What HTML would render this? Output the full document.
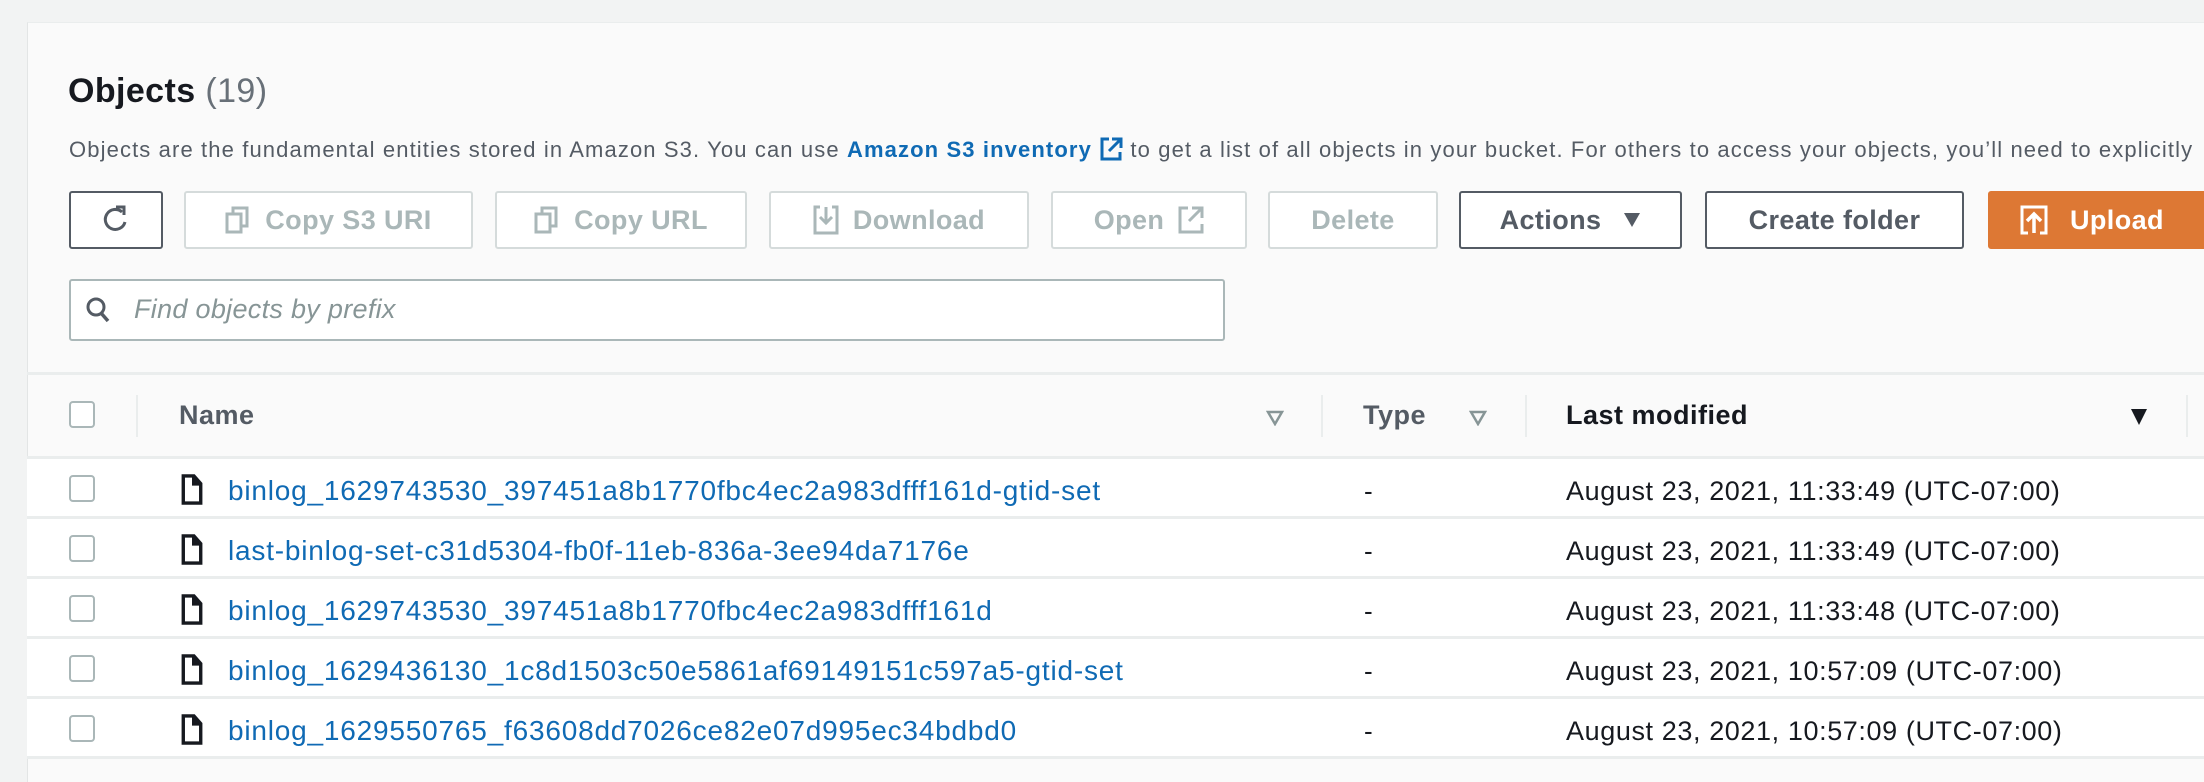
<!DOCTYPE html>
<html><head><meta charset="utf-8"><style>
*{box-sizing:border-box;margin:0;padding:0}
body{width:2204px;height:760px;overflow:hidden;background:#f2f3f3;font-family:"Liberation Sans",sans-serif;position:relative}
.panel{position:absolute;left:27px;top:22px;width:2200px;height:760px;background:#fafafa;border-left:1px solid #e3e5e5;border-top:1px solid #eaeded}
.a{position:absolute}
.btn{position:absolute;top:191px;height:58px;border:2px solid #d5dbdb;border-radius:3px;background:#fff;color:#aab7b8;font-weight:bold;font-size:27px;display:flex;align-items:center;justify-content:center;gap:14px;letter-spacing:0.4px}
.btn.dark{border-color:#545b64;color:#545b64}
.cb{position:absolute;left:69px;width:26px;height:27px;border:2px solid #aab7b8;border-radius:4px;background:#fff}
.row{position:absolute;left:27px;width:2180px;height:60px;background:#fff;border-bottom:3px solid #eaeded}
.fn{position:absolute;left:228px;color:#0f6ab4;font-size:28px;line-height:32px;letter-spacing:0.8px;white-space:nowrap}
.dt{position:absolute;left:1566px;color:#16191f;font-size:27px;line-height:32px;letter-spacing:0.6px;white-space:nowrap}
.dash{position:absolute;left:1364px;color:#16191f;font-size:26px;line-height:32px}
.th{position:absolute;top:399px;font-size:27px;line-height:32px;font-weight:bold;color:#545b64;letter-spacing:0.5px}
.div{position:absolute;top:395px;width:2px;height:42px;background:#eaeded}
</style></head><body>
<div class="panel"></div>
<div class="a" style="left:68px;top:72px;font-size:34px;font-weight:bold;color:#16191f;letter-spacing:0.4px">Objects <span style="font-weight:normal;color:#687078">(19)</span></div>
<div class="a" style="left:69px;top:136px;font-size:22px;color:#545b64;white-space:nowrap;letter-spacing:1.12px">Objects are the fundamental entities stored in Amazon S3. You can use <b style="color:#0f6ab4">Amazon S3 inventory</b> <svg width="24" height="26" viewBox="0 0 24 26" style="vertical-align:-5px"><path d="M10 3H3v20h18v-7" fill="none" stroke="#0f6ab4" stroke-width="3"/><path d="M13 3h9v9M22 3L10 15" fill="none" stroke="#0f6ab4" stroke-width="3"/></svg> to get a list of all objects in your bucket. For others to access your objects, you’ll need to explicitly</div>

<div class="btn dark" style="left:69px;width:94px"><svg width="26" height="32" viewBox="0 0 26 32"><path d="M19 8A10 10 0 1 0 22 18" fill="none" stroke="#545b64" stroke-width="3"/><path d="M13 3h8v8" fill="none" stroke="#545b64" stroke-width="3"/></svg></div>
<div class="btn" style="left:184px;width:289px"><svg width="26" height="28" viewBox="0 0 26 28"><rect x="2" y="8" width="14" height="18" fill="none" stroke="#aab7b8" stroke-width="3"/><path d="M8 8V2h14v18h-6" fill="none" stroke="#aab7b8" stroke-width="3"/></svg>Copy S3 URI</div>
<div class="btn" style="left:495px;width:252px"><svg width="26" height="28" viewBox="0 0 26 28"><rect x="2" y="8" width="14" height="18" fill="none" stroke="#aab7b8" stroke-width="3"/><path d="M8 8V2h14v18h-6" fill="none" stroke="#aab7b8" stroke-width="3"/></svg>Copy URL</div>
<div class="btn" style="left:769px;width:260px"><svg width="26" height="30" viewBox="0 0 26 30"><path d="M7 2H2v26h22V2h-5" fill="none" stroke="#aab7b8" stroke-width="3"/><path d="M13 2v16M7 12l6 6 6-6" fill="none" stroke="#aab7b8" stroke-width="3"/></svg>Download</div>
<div class="btn" style="left:1051px;width:196px">Open <svg width="26" height="28" viewBox="0 0 26 28"><path d="M10 2H2v24h22v-8" fill="none" stroke="#aab7b8" stroke-width="3"/><path d="M14 2h10v10M24 2L11 15" fill="none" stroke="#aab7b8" stroke-width="3"/></svg></div>
<div class="btn" style="left:1268px;width:170px">Delete</div>
<div class="btn dark" style="left:1459px;width:223px;gap:22px">Actions <svg width="18" height="16" viewBox="0 0 18 16"><path d="M1 1h16L9 15z" fill="#545b64"/></svg></div>
<div class="btn dark" style="left:1705px;width:259px">Create folder</div>
<div class="btn" style="left:1988px;width:240px;background:#dd7834;border-color:#dd7834;color:#fff;justify-content:flex-start;padding-left:30px;gap:22px"><svg width="28" height="30" viewBox="0 0 28 30"><path d="M8 2H2v26h6M20 2h6v26h-6M2 2h24" fill="none" stroke="#fff" stroke-width="3"/><path d="M14 28V9M7 16l7-7 7 7" fill="none" stroke="#fff" stroke-width="3.5"/></svg>Upload</div>

<div class="a" style="left:69px;top:279px;width:1156px;height:62px;border:2px solid #aab7b8;border-radius:3px;background:#fff"></div>
<svg class="a" style="left:85px;top:296px" width="26" height="28" viewBox="0 0 26 28"><circle cx="11" cy="11" r="8" fill="none" stroke="#545b64" stroke-width="3"/><path d="M16 17l7 8" stroke="#545b64" stroke-width="3.5"/></svg>
<div class="a" style="left:134px;top:294px;font-size:27px;font-style:italic;color:#879596;letter-spacing:0.3px">Find objects by prefix</div>

<div class="a" style="left:27px;top:372px;width:2180px;height:3px;background:#eaeded"></div>
<div class="a" style="left:27px;top:456px;width:2180px;height:3px;background:#eaeded"></div>
<div class="cb" style="top:401px"></div>
<div class="div" style="left:136px"></div>
<div class="th" style="left:179px">Name</div>
<svg class="a" style="left:1266px;top:410px" width="18" height="16" viewBox="0 0 18 16"><path d="M2 2h14L9 14z" fill="none" stroke="#879596" stroke-width="2.5"/></svg>
<div class="div" style="left:1321px"></div>
<div class="th" style="left:1363px">Type</div>
<svg class="a" style="left:1469px;top:410px" width="18" height="16" viewBox="0 0 18 16"><path d="M2 2h14L9 14z" fill="none" stroke="#879596" stroke-width="2.5"/></svg>
<div class="div" style="left:1525px"></div>
<div class="th" style="left:1566px;color:#16191f">Last modified</div>
<svg class="a" style="left:2130px;top:408px" width="18" height="18" viewBox="0 0 18 18"><path d="M1 1h16L9 17z" fill="#16191f"/></svg>
<div class="div" style="left:2186px"></div>

<div class="row" style="top:459px"></div>
<div class="row" style="top:519px"></div>
<div class="row" style="top:579px"></div>
<div class="row" style="top:639px"></div>
<div class="row" style="top:699px"></div>

<svg width="0" height="0" style="position:absolute"><defs><symbol id="f" viewBox="0 0 22 32"><path d="M2 2h11l7 8v20H2z" fill="none" stroke="#16191f" stroke-width="3.5"/><path d="M12 2v9h8" fill="#16191f" stroke="#16191f" stroke-width="2"/></symbol></defs></svg>

<div class="cb" style="top:475px"></div><svg class="a" style="left:181px;top:474px" width="22" height="31"><use href="#f"/></svg>
<div class="fn" style="top:475px">binlog_1629743530_397451a8b1770fbc4ec2a983dfff161d-gtid-set</div><div class="dash" style="top:475px">-</div><div class="dt" style="top:475px">August 23, 2021, 11:33:49 (UTC-07:00)</div>

<div class="cb" style="top:535px"></div><svg class="a" style="left:181px;top:534px" width="22" height="31"><use href="#f"/></svg>
<div class="fn" style="top:535px">last-binlog-set-c31d5304-fb0f-11eb-836a-3ee94da7176e</div><div class="dash" style="top:535px">-</div><div class="dt" style="top:535px">August 23, 2021, 11:33:49 (UTC-07:00)</div>

<div class="cb" style="top:595px"></div><svg class="a" style="left:181px;top:594px" width="22" height="31"><use href="#f"/></svg>
<div class="fn" style="top:595px">binlog_1629743530_397451a8b1770fbc4ec2a983dfff161d</div><div class="dash" style="top:595px">-</div><div class="dt" style="top:595px">August 23, 2021, 11:33:48 (UTC-07:00)</div>

<div class="cb" style="top:655px"></div><svg class="a" style="left:181px;top:654px" width="22" height="31"><use href="#f"/></svg>
<div class="fn" style="top:655px">binlog_1629436130_1c8d1503c50e5861af69149151c597a5-gtid-set</div><div class="dash" style="top:655px">-</div><div class="dt" style="top:655px">August 23, 2021, 10:57:09 (UTC-07:00)</div>

<div class="cb" style="top:715px"></div><svg class="a" style="left:181px;top:714px" width="22" height="31"><use href="#f"/></svg>
<div class="fn" style="top:715px">binlog_1629550765_f63608dd7026ce82e07d995ec34bdbd0</div><div class="dash" style="top:715px">-</div><div class="dt" style="top:715px">August 23, 2021, 10:57:09 (UTC-07:00)</div>
</body></html>
